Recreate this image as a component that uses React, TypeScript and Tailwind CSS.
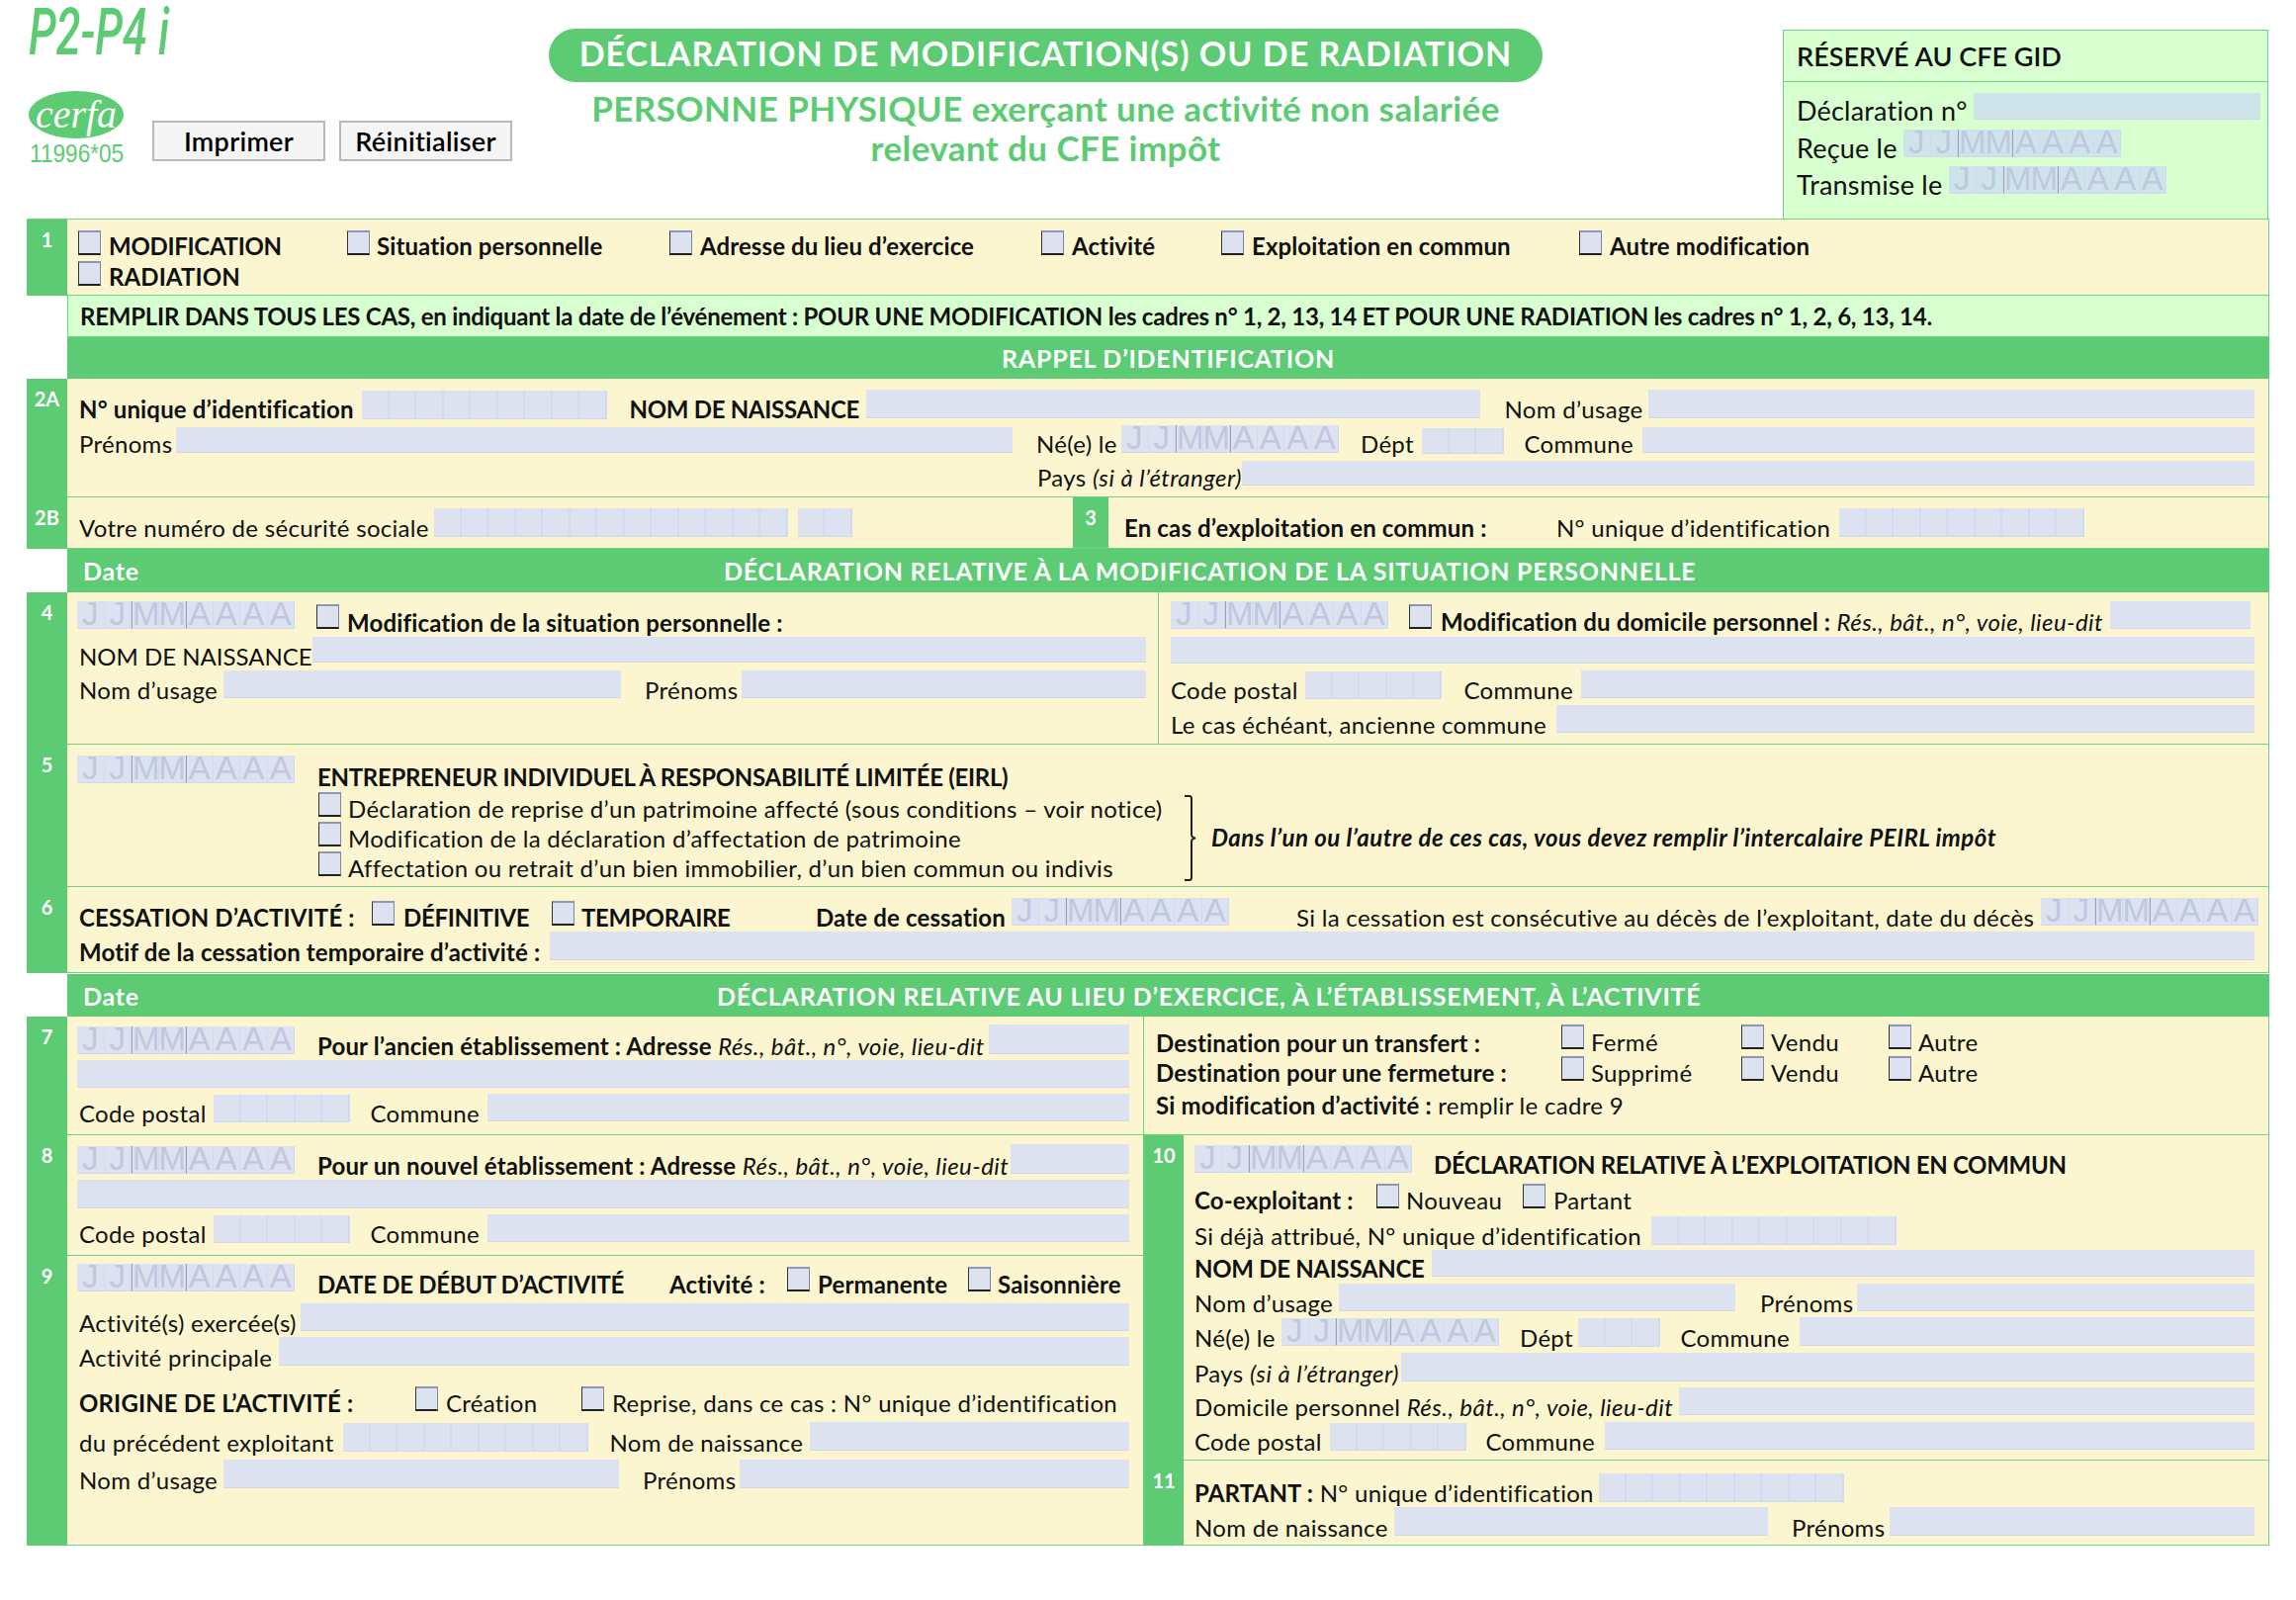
import React from 'react';

type P = { className?: string; children?: React.ReactNode };

// fixed-size form: a line sits its text baseline on the bottom edge of the fields
const Line = ({ className = '', children }: P) => <div className={`flex items-baseline ${className}`}>{children}</div>;
const T = ({ className = '', children }: P) => <span className={`shrink-0 translate-y-[1px] whitespace-nowrap ${className}`}>{children}</span>;
const B = ({ className = '', children }: P) => <T className={`font-bold tracking-[0.15px] ${className}`}>{children}</T>;
const Caps = ({ className = '', children }: P) => <T className={`font-bold tracking-[-0.3px] ${className}`}>{children}</T>;
const Strong = ({ children }: P) => <b className="font-bold tracking-[0.15px]">{children}</b>;
const It = ({ children }: P) => <i className="tracking-[0.45px]">{children}</i>;
const Field = ({ className = '' }: P) => <div className={`border-b border-[#d2d7e8] bg-[#dce2f0] ${className}`} />;

const Check = ({ className = '' }: P) => (
  <div className={`h-[25px] w-[23px] shrink-0 border-b-2 border-l border-r border-t-2 border-b-[#222] border-l-[#333] border-r-[#7f86a8] border-t-[#8f96b8] bg-[#dce2f0] ${className}`} />
);

const Comb = ({ n, className = '' }: { n: number; className?: string }) => (
  <div className={`flex h-[29px] shrink-0 border-b border-[#d2d7ee] bg-[#dce2f0] ${className}`}>
    {Array.from({ length: n }).map((_, i) => (
      <div key={i} className="h-full w-[27.5px] border-r-2 border-[#d3d9f0]" />
    ))}
  </div>
);

const DateBox = ({ className = '', tint = false }: { className?: string; tint?: boolean }) => (
  <div className={`flex h-[28px] w-fit shrink-0 ${tint ? 'bg-[#cfe4ea]' : 'bg-[#dce2f0]'} ${className}`}>
    {'JJMMAAAA'.split('').map((c, i) => (
      <div key={i} className={`relative h-full w-[27.5px] border-b border-r border-[#d2d8ee] ${i === 2 || i === 4 ? 'border-l border-l-[#9aa0b8]' : ''}`}>
        <span className="absolute inset-x-0 bottom-[-1px] text-center text-[33px] font-normal leading-[30px] tracking-normal text-[#c0c8e0] [font-family:'Liberation_Sans',sans-serif]">{c}</span>
      </div>
    ))}
  </div>
);

const Num = ({ children, className = 'w-[41px]' }: P) => (
  <div className={`shrink-0 bg-[#5ccb73] text-center text-[20px] font-bold leading-[40px] tracking-normal text-white ${className}`}>{children}</div>
);

const Block = ({ num, className = '', numClass, children }: P & { num: string; numClass?: string }) => (
  <div className={`flex ${className}`}>
    <Num className={numClass}>{num}</Num>
    <div className="min-w-0 flex-1 border-b border-r border-[#6fd086] bg-[#fbf6cf]">{children}</div>
  </div>
);

const Band = ({ className = '', children }: P) => (
  <div className={`ml-[41px] flex items-center bg-[#5ccb73] text-[25px] font-bold tracking-[0.75px] text-white ${className}`}>{children}</div>
);

const Addr = 'Rés., bât., n°, voie, lieu-dit';

function Header() {
  return (
    <div className="flex h-[221px] tracking-normal">
      <div className="w-[528px] shrink-0">
        <div className="h-[87px] pl-[2px]">
          <span className="block origin-left scale-x-[0.68] text-[66px] font-medium italic leading-[66px] text-[#5ccb73] [font-family:Roboto,sans-serif]">P2-P4 i</span>
        </div>
        <div className="flex">
          <div className="w-[127px] shrink-0">
            <div className="ml-[2px] mt-[5px] flex h-[48px] w-[96px] items-center justify-center rounded-[50%] bg-[#5ccb73] text-[40px] italic leading-[40px] text-white [font-family:'Liberation_Serif',serif]">cerfa</div>
            <div className="ml-[3px] mt-[2px] origin-left scale-x-[0.87] text-[26px] leading-[26px] text-[#5ccb73] [font-family:'Liberation_Sans',sans-serif]">11996*05</div>
          </div>
          <button className="mt-[35px] h-[41px] w-[175px] border-2 border-[#b8b8b8] bg-[#f5f5f5] text-[27px] font-semibold tracking-[0.3px] text-black">Imprimer</button>
          <button className="ml-[14px] mt-[35px] h-[41px] w-[175px] border-2 border-[#b8b8b8] bg-[#f5f5f5] text-[27px] font-semibold tracking-[0.3px] text-black">Réinitialiser</button>
        </div>
      </div>
      <div className="w-[1005px] shrink-0 pt-[29px] text-center">
        <div className="flex h-[54px] items-center justify-center rounded-[27px] bg-[#5ccb73] pb-[5px] text-[34px] font-bold tracking-[1px] text-white">DÉCLARATION DE MODIFICATION(S) OU DE RADIATION</div>
        <div className="mt-[6px] text-[35px] font-bold leading-[40px] tracking-[0.4px] text-[#5ccb73]">
          PERSONNE PHYSIQUE exerçant une activité non salariée
          <br />
          relevant du CFE impôt
        </div>
      </div>
      <div className="ml-[243px] mt-[30px] w-[491px] shrink-0 border-l border-r border-t border-[#6fd086] bg-[#d8ffd0]">
        <div className="flex h-[52px] items-center border-b border-[#6fd086] pl-[13px] text-[27px] font-semibold">RÉSERVÉ AU CFE GID</div>
        <div className="pl-[13px] pt-[11px] text-[27px] tracking-[0.2px]">
          <Line className="h-[37px]">
            <T className="w-[179px]">Déclaration n°</T>
            <Field className="h-[27px] w-[290px] !bg-[#cfe4ea]" />
          </Line>
          <Line className="h-[37px]">
            <T className="w-[108px]">Reçue le</T>
            <DateBox tint />
          </Line>
          <Line>
            <T className="w-[154px]">Transmise le</T>
            <DateBox tint />
          </Line>
        </div>
      </div>
    </div>
  );
}

function TopSection() {
  return (
    <>
      <Block num="1" className="h-[78px] border-t border-[#6fd086]">
        <div className="pl-[11px] pt-[11px] font-bold tracking-[0.1px]">
          <Line className="h-[31px] [&>span]:!translate-y-0">
            <Check />
            <T className="ml-[8px] w-[241px] tracking-[-0.3px]">MODIFICATION</T>
            <Check />
            <T className="ml-[7px] w-[296px]">Situation personnelle</T>
            <Check />
            <T className="ml-[8px] w-[345px]">Adresse du lieu d’exercice</T>
            <Check />
            <T className="ml-[8px] w-[151px]">Activité</T>
            <Check />
            <T className="ml-[8px] w-[331px]">Exploitation en commun</T>
            <Check />
            <T className="ml-[8px]">Autre modification</T>
          </Line>
          <Line className="[&>span]:!translate-y-0">
            <Check />
            <T className="ml-[8px]">RADIATION</T>
          </Line>
        </div>
      </Block>
      <div className="ml-[41px] flex h-[42px] items-center border-b border-l border-r border-[#6fd086] bg-[#d8ffd0] pl-[12px] font-bold tracking-[-0.24px]">
        REMPLIR DANS TOUS LES CAS, en indiquant la date de l’événement : POUR UNE MODIFICATION les cadres n° 1, 2, 13, 14 ET POUR UNE RADIATION les cadres n° 1, 2, 6, 13, 14.
      </div>
      <Band className="h-[42px] justify-center">RAPPEL D’IDENTIFICATION</Band>
      <Block num="2A" className="h-[120px]">
        <div className="pl-[12px] pr-[14px] pt-[11px]">
          <Line className="h-[36px] [&>span]:!translate-y-0">
            <B className="w-[286px]">N° unique d’identification</B>
            <Comb n={9} />
            <Caps className="ml-[23px] w-[239px]">NOM DE NAISSANCE</Caps>
            <Field className="h-[29px] w-[621px]" />
            <T className="ml-[25px] w-[145px]">Nom d’usage</T>
            <Field className="h-[29px] flex-1" />
          </Line>
          <Line className="h-[36px] [&>span]:!translate-y-0">
            <T className="w-[98px]">Prénoms</T>
            <Field className="h-[26px] w-[846px]" />
            <T className="ml-[24px] w-[86px]">Né(e) le</T>
            <DateBox />
            <T className="ml-[22px] w-[62px]">Dépt</T>
            <Comb n={3} className="!h-[26px]" />
            <T className="ml-[21px] w-[119px]">Commune</T>
            <Field className="h-[26px] flex-1" />
          </Line>
          <Line>
            <T className="ml-[969px] w-[207px]">Pays <It>(si à l’étranger)</It></T>
            <Field className="h-[25px] flex-1" />
          </Line>
        </div>
      </Block>
      <Block num="2B" className="h-[52px]">
        <div className="flex h-full">
          <Line className="w-[1017px] shrink-0 pl-[12px] pt-[11px]">
            <T className="w-[359px]">Votre numéro de sécurité sociale</T>
            <Comb n={13} />
            <Comb n={2} className="ml-[10px]" />
          </Line>
          <Num className="w-[36px]">3</Num>
          <Line className="pl-[16px] pt-[11px]">
            <B className="w-[437px]">En cas d’exploitation en commun :</B>
            <T className="w-[286px]">N° unique d’identification</T>
            <Comb n={9} />
          </Line>
        </div>
      </Block>
    </>
  );
}

function SituationSection() {
  return (
    <>
      <Band className="h-[44px] pl-[16px]">
        <T className="w-[648px] !translate-y-0">Date</T>
        <T className="!translate-y-0">DÉCLARATION RELATIVE À LA MODIFICATION DE LA SITUATION PERSONNELLE</T>
      </Band>
      <Block num="4" className="h-[154px]">
        <div className="flex h-full">
          <div className="w-[1104px] shrink-0 border-r border-[#6fd086] pl-[12px] pr-[12px] pt-[9px]">
            <Line className="h-[36px]">
              <DateBox className="-ml-[2px]" />
              <Check className="ml-[22px]" />
              <B className="ml-[8px] !translate-y-[3px]">Modification de la situation personnelle :</B>
            </Line>
            <Line className="h-[34px]">
              <T className="w-[236px] !translate-y-[3px] tracking-normal">NOM DE NAISSANCE</T>
              <Field className="h-[26px] flex-1" />
            </Line>
            <Line>
              <T className="w-[146px]">Nom d’usage</T>
              <Field className="h-[28px] w-[402px]" />
              <T className="ml-[24px] w-[98px]">Prénoms</T>
              <Field className="h-[28px] flex-1" />
            </Line>
          </div>
          <div className="flex-1 pl-[12px] pr-[14px] pt-[9px]">
            <Line className="h-[36px]">
              <DateBox />
              <Check className="ml-[21px]" />
              <T className="ml-[9px] w-[677px] !translate-y-[2px]"><Strong>Modification du domicile personnel :</Strong> <It>{Addr}</It></T>
              <Field className="h-[28px] w-[142px]" />
            </Line>
            <Line className="h-[34px]">
              <Field className="h-[27px] flex-1" />
            </Line>
            <Line className="h-[35px]">
              <T className="w-[136px]">Code postal</T>
              <Comb n={5} className="!h-[28px]" />
              <T className="ml-[23px] w-[118px]">Commune</T>
              <Field className="h-[28px] flex-1" />
            </Line>
            <Line>
              <T className="w-[390px]">Le cas échéant, ancienne commune</T>
              <Field className="h-[28px] flex-1" />
            </Line>
          </div>
        </div>
      </Block>
      <Block num="5" className="h-[144px]">
        <div className="flex h-full pl-[10px]">
          <div className="w-[243px] shrink-0 pt-[11px]">
            <DateBox />
          </div>
          <div className="pt-[19px]">
            <Caps className="block h-[29px]">ENTREPRENEUR INDIVIDUEL À RESPONSABILITÉ LIMITÉE (EIRL)</Caps>
            <div className="flex">
              <div className="w-[876px] shrink-0">
                <Line className="h-[30px]"><Check className="ml-[1px]" /><T className="ml-[7px]">Déclaration de reprise d’un patrimoine affecté (sous conditions – voir notice)</T></Line>
                <Line className="h-[30px]"><Check className="ml-[1px]" /><T className="ml-[7px]">Modification de la déclaration d’affectation de patrimoine</T></Line>
                <Line><Check className="ml-[1px]" /><T className="ml-[7px]">Affectation ou retrait d’un bien immobilier, d’un bien commun ou indivis</T></Line>
              </div>
              <svg width="14" height="87" viewBox="0 0 14 87" fill="none" stroke="#222" strokeWidth="2" className="mt-[3px] shrink-0">
                <path d="M1 1 H6 Q8 1 8 4 V40 Q8 43 12 43.5 Q8 44 8 47 V83 Q8 86 6 86 H1" />
              </svg>
              <div className="ml-[14px] flex h-[90px] items-center">
                <T className="font-bold italic tracking-[0.5px]">Dans l’un ou l’autre de ces cas, vous devez remplir l’intercalaire PEIRL impôt</T>
              </div>
            </div>
          </div>
        </div>
      </Block>
      <Block num="6" className="h-[87px]">
        <div className="pl-[12px] pr-[14px] pt-[11px]">
          <Line className="h-[34px]">
            <B className="w-[296px]">CESSATION D’ACTIVITÉ :</B>
            <Check />
            <Caps className="ml-[9px] w-[150px]">DÉFINITIVE</Caps>
            <Check />
            <Caps className="ml-[7px] w-[237px]">TEMPORAIRE</Caps>
            <B className="w-[198px]">Date de cessation</B>
            <DateBox />
            <T className="ml-[68px] w-[753px]">Si la cessation est consécutive au décès de l’exploitant, date du décès</T>
            <DateBox />
          </Line>
          <Line>
            <B className="w-[476px]">Motif de la cessation temporaire d’activité :</B>
            <Field className="h-[29px] flex-1" />
          </Line>
        </div>
      </Block>
    </>
  );
}

function LeftColumn() {
  return (
    <div className="w-[1130px] shrink-0">
      <Block num="7" className="h-[120px]">
        <div className="pl-[12px] pr-[14px] pt-[8px]">
          <Line className="h-[36px]">
            <DateBox className="-ml-[2px]" />
            <T className="ml-[23px] w-[679px]"><Strong>Pour l’ancien établissement : Adresse</Strong> <It>{Addr}</It></T>
            <Field className="h-[30px] flex-1" />
          </Line>
          <Line className="h-[34px]"><Field className="-ml-[2px] h-[28px] flex-1" /></Line>
          <Line>
            <T className="w-[136px]">Code postal</T>
            <Comb n={5} className="!h-[28px]" />
            <T className="ml-[21px] w-[118px]">Commune</T>
            <Field className="h-[28px] flex-1" />
          </Line>
        </div>
      </Block>
      <Block num="8" className="h-[122px]">
        <div className="pl-[12px] pr-[14px] pt-[9px]">
          <Line className="h-[36px]">
            <DateBox className="-ml-[2px]" />
            <T className="ml-[23px] w-[701px]"><Strong>Pour un nouvel établissement : Adresse</Strong> <It>{Addr}</It></T>
            <Field className="h-[30px] flex-1" />
          </Line>
          <Line className="h-[35px]"><Field className="-ml-[2px] h-[29px] flex-1" /></Line>
          <Line>
            <T className="w-[136px]">Code postal</T>
            <Comb n={5} className="!h-[28px]" />
            <T className="ml-[21px] w-[118px]">Commune</T>
            <Field className="h-[28px] flex-1" />
          </Line>
        </div>
      </Block>
      <Block num="9" className="h-[293px]">
        <div className="pl-[12px] pr-[14px] pt-[8px]">
          <Line className="h-[40px]">
            <DateBox className="-ml-[2px]" />
            <Caps className="ml-[23px] w-[356px] !translate-y-[2px]">DATE DE DÉBUT D’ACTIVITÉ</Caps>
            <B className="w-[119px] !translate-y-[2px]">Activité :</B>
            <Check />
            <B className="ml-[8px] w-[152px] !translate-y-[2px]">Permanente</B>
            <Check />
            <B className="ml-[7px] !translate-y-[2px]">Saisonnière</B>
          </Line>
          <Line className="h-[34px]">
            <T className="w-[224px]">Activité(s) exercée(s)</T>
            <Field className="h-[28px] flex-1" />
          </Line>
          <Line className="h-[50px]">
            <T className="w-[202px]">Activité principale</T>
            <Field className="h-[29px] flex-1" />
          </Line>
          <Line className="h-[36px]">
            <B className="w-[340px]">ORIGINE DE L’ACTIVITÉ :</B>
            <Check />
            <T className="ml-[8px] w-[137px]">Création</T>
            <Check />
            <T className="ml-[8px]">Reprise, dans ce cas : N° unique d’identification</T>
          </Line>
          <Line className="h-[38px]">
            <T className="w-[267px]">du précédent exploitant</T>
            <Comb n={9} />
            <T className="ml-[22px] w-[202px]">Nom de naissance</T>
            <Field className="h-[29px] flex-1" />
          </Line>
          <Line>
            <T className="w-[146px]">Nom d’usage</T>
            <Field className="h-[29px] w-[400px]" />
            <T className="ml-[24px] w-[98px]">Prénoms</T>
            <Field className="h-[29px] flex-1" />
          </Line>
        </div>
      </Block>
    </div>
  );
}

function RightColumn() {
  return (
    <div className="min-w-0 flex-1">
      <div className="h-[120px] border-b border-r border-[#6fd086] bg-[#fbf6cf] pl-[12px] pt-[8px]">
        <Line className="h-[32px]">
          <B className="w-[410px] !translate-y-[3px]">Destination pour un transfert :</B>
          <Check />
          <T className="ml-[7px] w-[152px] !translate-y-[2px]">Fermé</T>
          <Check />
          <T className="ml-[7px] w-[119px] !translate-y-[2px]">Vendu</T>
          <Check />
          <T className="ml-[7px] !translate-y-[2px]">Autre</T>
        </Line>
        <Line className="h-[36px]">
          <B className="w-[410px]">Destination pour une fermeture :</B>
          <Check />
          <T className="ml-[7px] w-[152px]">Supprimé</T>
          <Check />
          <T className="ml-[7px] w-[119px]">Vendu</T>
          <Check />
          <T className="ml-[7px]">Autre</T>
        </Line>
        <Line><T><Strong>Si modification d’activité :</Strong> remplir le cadre 9</T></Line>
      </div>
      <Block num="10" numClass="w-[40px]" className="h-[329px]">
        <div className="pl-[11px] pr-[14px] pt-[10px]">
          <Line className="h-[39px]">
            <DateBox />
            <Caps className="ml-[22px]">DÉCLARATION RELATIVE À L’EXPLOITATION EN COMMUN</Caps>
          </Line>
          <Line className="h-[33px]">
            <B className="w-[184px]">Co-exploitant :</B>
            <Check />
            <T className="ml-[7px] w-[118px]">Nouveau</T>
            <Check />
            <T className="ml-[8px]">Partant</T>
          </Line>
          <Line className="h-[34px]">
            <T className="w-[462px]">Si déjà attribué, N° unique d’identification</T>
            <Comb n={9} />
          </Line>
          <Line className="h-[34px]">
            <Caps className="w-[240px]">NOM DE NAISSANCE</Caps>
            <Field className="h-[27px] flex-1" />
          </Line>
          <Line className="h-[34px]">
            <T className="w-[146px]">Nom d’usage</T>
            <Field className="h-[28px] w-[401px]" />
            <T className="ml-[25px] w-[98px]">Prénoms</T>
            <Field className="h-[28px] flex-1" />
          </Line>
          <Line className="h-[36px]">
            <T className="w-[88px]">Né(e) le</T>
            <DateBox />
            <T className="ml-[21px] w-[59px]">Dépt</T>
            <Comb n={3} />
            <T className="ml-[21px] w-[120px]">Commune</T>
            <Field className="h-[29px] flex-1" />
          </Line>
          <Line className="h-[35px]">
            <T className="w-[209px]">Pays <It>(si à l’étranger)</It></T>
            <Field className="h-[29px] flex-1" />
          </Line>
          <Line className="h-[35px]">
            <T className="w-[490px]">Domicile personnel <It>{Addr}</It></T>
            <Field className="h-[28px] flex-1" />
          </Line>
          <Line>
            <T className="w-[137px]">Code postal</T>
            <Comb n={5} className="!h-[28px]" />
            <T className="ml-[20px] w-[120px]">Commune</T>
            <Field className="h-[28px] flex-1" />
          </Line>
        </div>
      </Block>
      <Block num="11" numClass="w-[40px]" className="h-[86px]">
        <div className="pl-[11px] pr-[14px] pt-[13px]">
          <Line className="h-[34px]">
            <T className="w-[409px]"><Strong>PARTANT :</Strong> N° unique d’identification</T>
            <Comb n={9} />
          </Line>
          <Line>
            <T className="w-[202px]">Nom de naissance</T>
            <Field className="h-[29px] w-[378px]" />
            <T className="ml-[24px] w-[99px]">Prénoms</T>
            <Field className="h-[29px] flex-1" />
          </Line>
        </div>
      </Block>
    </div>
  );
}

export default function App() {
  return (
    <div className="h-[1618px] w-[2322px] overflow-hidden bg-white pl-[27px] text-[24px] leading-[26px] tracking-[0.3px] text-[#111] [font-family:Lato,sans-serif]">
      <div className="w-[2268px]">
        <Header />
        <TopSection />
        <SituationSection />
        <div className="mt-[1px]" />
        <Band className="h-[43px] pl-[16px]">
          <T className="w-[641px] !translate-y-0">Date</T>
          <T className="!translate-y-0">DÉCLARATION RELATIVE AU LIEU D’EXERCICE, À L’ÉTABLISSEMENT, À L’ACTIVITÉ</T>
        </Band>
        <div className="flex">
          <LeftColumn />
          <RightColumn />
        </div>
      </div>
    </div>
  );
}
